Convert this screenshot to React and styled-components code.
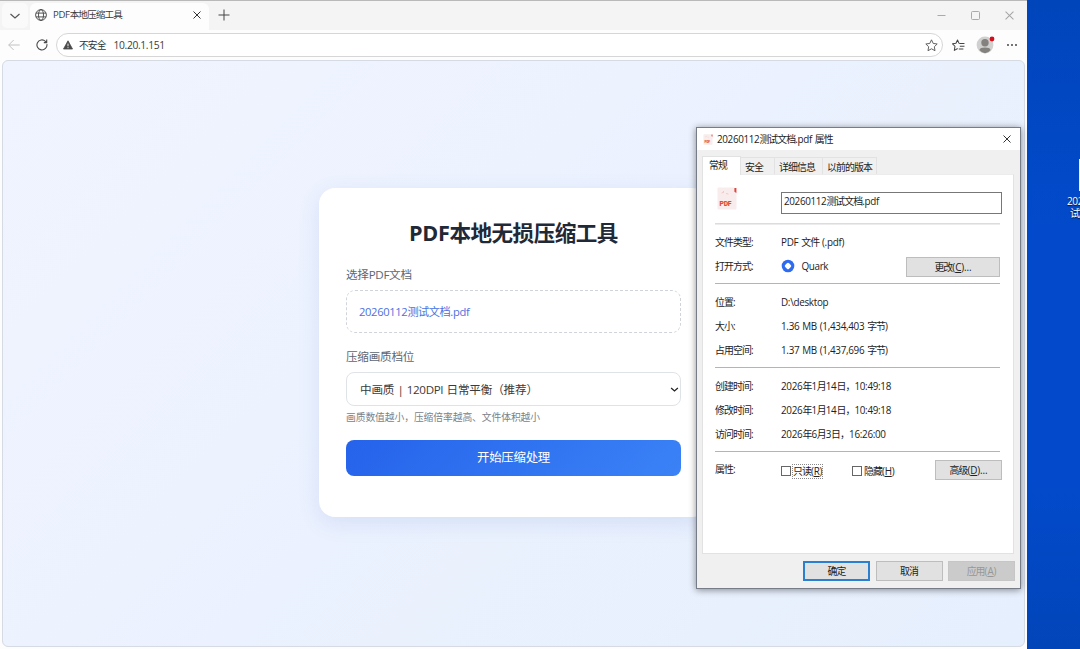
import React from 'react';
import styled, { createGlobalStyle } from 'styled-components';

const HAN = /([\u3000-\u9fff\uff00-\uffef]+)/;

// Chinese runs are set tighter than the latin ones
const Text = ({ children }) =>
  children.split(HAN).map((part, i) => (HAN.test(part) ? <Han key={i}>{part}</Han> : part));

const ChevronIcon = ({ size = 12, width = 1.2, color = '#555' }) => (
  <svg width={size} height={size} viewBox="0 0 12 12" fill="none" stroke={color} strokeWidth={width}>
    <path d="M1.5 4L6 8l4.5-4" />
  </svg>
);

const CloseIcon = ({ size = 8, color = '#333', width = 1 }) => (
  <svg width={size} height={size} viewBox="0 0 8 8" stroke={color} strokeWidth={width}>
    <path d="M.5.5l7 7M7.5.5l-7 7" />
  </svg>
);

const GlobeIcon = () => (
  <svg width="12" height="12" viewBox="0 0 12 12" fill="none" stroke="#444" strokeWidth="0.9">
    <circle cx="6" cy="6" r="5.4" />
    <ellipse cx="6" cy="6" rx="2.5" ry="5.4" />
    <path d="M1 4.1h10M1 7.9h10" />
  </svg>
);

const BackIcon = () => (
  <svg width="12" height="12" viewBox="0 0 12 12" fill="none" stroke="#c2c2c2" strokeWidth="1">
    <path d="M11.7 6H.7M5.7 1L.7 6l5 5" />
  </svg>
);

const ReloadIcon = () => (
  <svg width="12" height="12" viewBox="0 0 12 12" fill="none" stroke="#4a4a4a" strokeWidth="1.1">
    <path d="M10.9 5.2A5 5 0 1 1 9.4 2.3L10.6 3.4M10.7.6v3H7.8" />
  </svg>
);

const WarningIcon = () => (
  <svg width="10" height="10" viewBox="0 0 10 10">
    <path d="M5 .8L9.5 9H.5z" fill="#4a4a4a" stroke="#4a4a4a" strokeWidth="0.8" strokeLinejoin="round" />
    <path d="M5 3.6v2.7M5 7.2v1" stroke="#fff" strokeWidth="0.9" />
  </svg>
);

const StarIcon = () => (
  <svg width="13" height="13" viewBox="0 0 24 24" fill="none" stroke="#555" strokeWidth="1.7" strokeLinejoin="round">
    <path d="M12 1.5l3.2 6.7 7.3 1-5.3 5.1 1.3 7.3L12 18.1l-6.5 3.5 1.3-7.3L1.5 9.2l7.3-1z" />
  </svg>
);

const FavoritesIcon = () => (
  <svg width="13" height="13" viewBox="0 0 24 24" fill="none" stroke="#444" strokeWidth="1.9" strokeLinejoin="round">
    <path d="M14 8.2l-1.2-.6L10.2 2 7.3 8 1 8.9l4.500 4.500L4.300 21l6.200-3.500" />
    <path d="M13.5 8.5H23M14.5 13.5H23M12.5 18.5H21" />
  </svg>
);

const ProfileIcon = () => (
  <svg width="20" height="20" viewBox="0 0 20 20">
    <circle cx="9" cy="10" r="8.4" fill="#d0d0ce" />
    <circle cx="9" cy="7.8" r="3.7" fill="#83827f" />
    <path d="M3.4 15c.5-2 2.6-2.6 5.6-2.6s5.1.6 5.6 2.6A8.4 8.4 0 0 1 9 18.3 8.4 8.4 0 0 1 3.4 15z" fill="#83827f" />
    <circle cx="16" cy="4" r="2.4" fill="#d0101d" />
  </svg>
);

const PdfIcon = ({ width = 20, height = 23 }) => (
  <svg width={width} height={height} viewBox="0 0 20 23">
    <path d="M1.5.5h15.2L19.5 4v17.5a1 1 0 0 1-1 1h-17a1 1 0 0 1-1-1v-20a1 1 0 0 1 1-1z" fill="#f8ecec" />
    <path d="M17.4 1h2v5l-2-1.200z" fill="#e0453c" />
    <path d="M4.500 6l2.500-.8M9 6.500l2.500.6M6 5l1-1" stroke="#f0c4c2" strokeWidth="0.9" />
    <text x="2.6" y="19.4" fontFamily="Roboto, sans-serif" fontWeight="900" fontSize="7" textLength="11.5" lengthAdjust="spacingAndGlyphs" fill="#e2483b">
      PDF
    </text>
  </svg>
);

const QuarkIcon = () => (
  <svg width="14" height="14" viewBox="0 0 14 14">
    <circle cx="7" cy="7" r="6.3" fill="#2e6bef" />
    <path d="M7 5.300L8.700 7 7 8.700 5.300 7z" fill="#fff" stroke="#fff" strokeWidth="3" strokeLinejoin="round" />
  </svg>
);

const App = () => (
  <Desktop>
    <GlobalStyle />
    <Browser>
      <TabStrip>
        <TabMenu>
          <ChevronIcon />
        </TabMenu>
        <Tab>
          <GlobeIcon />
          <TabTitle><Text>PDF本地压缩工具</Text></TabTitle>
          <CloseIcon />
        </Tab>
        <NewTab>
          <svg width="12" height="12" viewBox="0 0 12 12" stroke="#444" strokeWidth="1">
            <path d="M6 .5v11M.5 6h11" />
          </svg>
        </NewTab>
        <WindowControls>
          <svg width="9" height="9" viewBox="0 0 9 9" stroke="#aaa"><path d="M.5 4.5h8" /></svg>
          <svg width="9" height="9" viewBox="0 0 9 9" fill="none" stroke="#aaa"><rect x=".5" y=".5" width="8" height="8" rx="1" /></svg>
          <CloseIcon size={9} color="#a5a5a5" width={0.9} />
        </WindowControls>
      </TabStrip>
      <Toolbar>
        <BackIcon />
        <ReloadIcon />
        <AddressBar>
          <WarningIcon />
          <Security><Text>不安全</Text></Security>
          <Url>10.20.1.151</Url>
          <StarIcon />
        </AddressBar>
        <FavoritesIcon />
        <ProfileIcon />
        <svg width="12" height="12" viewBox="0 0 12 12" fill="#333">
          <circle cx="2" cy="6" r="0.9" />
          <circle cx="6" cy="6" r="0.9" />
          <circle cx="10" cy="6" r="0.9" />
        </svg>
      </Toolbar>
      <Page>
        <Card>
          <Title><Text>PDF本地无损压缩工具</Text></Title>
          <Label><Text>选择PDF文档</Text></Label>
          <FileBox><Text>20260112测试文档.pdf</Text></FileBox>
          <Label><Text>压缩画质档位</Text></Label>
          <Select>
            <span><Text>中画质 | 120DPI 日常平衡（推荐）</Text></span>
            <ChevronIcon size={9} width={1.7} color="#222" />
          </Select>
          <Hint><Text>画质数值越小，压缩倍率越高、文件体积越小</Text></Hint>
          <Submit><Text>开始压缩处理</Text></Submit>
        </Card>
      </Page>
    </Browser>

    <DesktopFile>
      <FileThumb />
      <FileName><Text>2026011</Text></FileName>
      <FileName $indent><Text>试文档</Text></FileName>
    </DesktopFile>

    <Dialog>
      <DialogTitle>
        <PdfIcon width={10} height={11} />
        <DialogName><Text>20260112测试文档.pdf 属性</Text></DialogName>
        <CloseIcon />
      </DialogTitle>
      <Tabs>
        <DialogTab $active $width={39}><Text>常规</Text></DialogTab>
        <DialogTab $width={34}><Text>安全</Text></DialogTab>
        <DialogTab $width={48}><Text>详细信息</Text></DialogTab>
        <DialogTab $width={54}><Text>以前的版本</Text></DialogTab>
      </Tabs>
      <Panel>
        <FileRow>
          <PdfIcon />
          <NameInput><Text>20260112测试文档.pdf</Text></NameInput>
        </FileRow>
        <Separator $light />
        <Section>
          <Row>
            <Key><Text>文件类型:</Text></Key>
            <Value><Text>PDF 文件 (.pdf)</Text></Value>
          </Row>
          <Row>
            <Key><Text>打开方式:</Text></Key>
            <AppName><QuarkIcon />Quark</AppName>
            <ChangeButton $width={94}><Text>更改(</Text><u>C</u>)...</ChangeButton>
          </Row>
        </Section>
        <Separator />
        <Section>
          <Row><Key><Text>位置:</Text></Key><Value>D:\desktop</Value></Row>
          <Row><Key><Text>大小:</Text></Key><Value><Text>1.36 MB (1,434,403 字节)</Text></Value></Row>
          <Row><Key><Text>占用空间:</Text></Key><Value><Text>1.37 MB (1,437,696 字节)</Text></Value></Row>
        </Section>
        <Separator />
        <Section>
          <Row><Key><Text>创建时间:</Text></Key><Value><Text>2026年1月14日，10:49:18</Text></Value></Row>
          <Row><Key><Text>修改时间:</Text></Key><Value><Text>2026年1月14日，10:49:18</Text></Value></Row>
          <Row><Key><Text>访问时间:</Text></Key><Value><Text>2026年6月3日，16:26:00</Text></Value></Row>
        </Section>
        <Separator />
        <AttributeRow>
          <Key><Text>属性:</Text></Key>
          <CheckField $width={71}>
            <Check />
            <CheckLabel $focused><Text>只读(</Text><u>R</u>)</CheckLabel>
          </CheckField>
          <CheckField $width={83}>
            <Check />
            <CheckLabel><Text>隐藏(</Text><u>H</u>)</CheckLabel>
          </CheckField>
          <Button $width={67}><Text>高级(</Text><u>D</u>)...</Button>
        </AttributeRow>
      </Panel>
      <Footer>
        <Button $width={67} $primary><Text>确定</Text></Button>
        <Button $width={67}><Text>取消</Text></Button>
        <Button $width={67} $disabled><Text>应用(</Text><u>A</u>)</Button>
      </Footer>
    </Dialog>
  </Desktop>
);

// Styled Components
const GlobalStyle = createGlobalStyle`
  * {
    box-sizing: border-box;
  }

  body {
    margin: 0;
    overflow: hidden;
    font-family: 'Open Sans', 'Noto Sans CJK SC', sans-serif;
    letter-spacing: -0.35px;
    word-spacing: 0.6px;
  }

  svg {
    flex: none;
    display: block;
  }
`;

const Han = styled.span`
  letter-spacing: -0.09em;
`;

const Desktop = styled.div`
  position: relative;
  width: 1080px;
  height: 649px;
  overflow: hidden;
  background: linear-gradient(180deg, #0145bb 0%, #024acb 35%, #024acb 75%, #0245b9 100%);
`;

const Browser = styled.div`
  display: flex;
  flex-direction: column;
  width: 1027px;
  height: 649px;
  padding-bottom: 2px;
  border-top: 1px solid #b9b9b9;
  background: #fdfdfd;
`;

const TabStrip = styled.div`
  display: flex;
  height: 29px;
  padding-top: 2px;
  background: #f4f4f4;
`;

const TabMenu = styled.div`
  display: flex;
  align-items: center;
  justify-content: center;
  width: 26px;
  height: 25px;
  margin: 0 2px;
  border-radius: 5px;
  background: #fafafa;
`;

const Tab = styled.div`
  display: flex;
  align-items: center;
  width: 179px;
  padding: 0 8px 4px 5px;
  border-radius: 6px 6px 0 0;
  background: #fdfdfd;
`;

const TabTitle = styled.span`
  flex: 1;
  margin-left: 6px;
  font-size: 9.6px;
  line-height: 14px;
  color: #3c3c3c;
`;

const NewTab = styled.div`
  display: flex;
  align-items: center;
  margin-left: 9px;
  padding-bottom: 4px;
`;

const WindowControls = styled.div`
  display: flex;
  align-items: center;
  gap: 25px;
  margin-left: auto;
  padding: 0 13px 3px 0;
`;

const Toolbar = styled.div`
  display: flex;
  align-items: center;
  height: 30px;
  padding: 0 9px 0 8px;

  > svg + svg {
    margin-left: 16px;
  }

  > div + svg {
    margin-left: 9px;
  }

  > div + svg + svg {
    margin-left: 11px;
  }

  > svg:last-child {
    margin-left: 10px;
  }
`;

const AddressBar = styled.div`
  display: flex;
  flex: 1;
  align-items: center;
  height: 24px;
  margin-left: 8px;
  padding: 0 4px 0 6px;
  border: 1px solid #d6d6d6;
  border-radius: 12px;
  background: #fff;
`;

const Security = styled.span`
  margin-left: 6px;
  font-size: 9.7px;
  color: #333;
`;

const Url = styled.span`
  flex: 1;
  margin-left: 8px;
  font-size: 10.3px;
  color: #3c3c3c;
`;

const Page = styled.div`
  display: flex;
  flex: 1;
  align-items: center;
  justify-content: center;
  margin: 0 2px;
  padding-bottom: 2px;
  border: 1px solid #d5dae3;
  border-radius: 6px;
  background: linear-gradient(135deg, #f0f4ff 0%, #e6effd 100%);
`;

const Card = styled.div`
  width: 389px;
  height: 329px;
  padding: 27px;
  border-radius: 16px;
  background: #fff;
  box-shadow: 0 6px 22px rgba(60, 100, 200, 0.12);
`;

const Title = styled.h1`
  margin: 0 0 16px;
  font-size: 21.6px;
  line-height: 36px;
  text-align: center;
  color: #1f2937;

  ${Han} {
    letter-spacing: -0.025em;
  }
`;

const Label = styled.div`
  font-size: 11.6px;
  line-height: 16px;
  color: #5c6672;

  ${Han} {
    letter-spacing: -0.02em;
  }
`;

const FileBox = styled.div`
  height: 43px;
  margin: 7px 0 16px;
  padding: 0 12px;
  border: 1.5px dashed #cfd4da;
  border-radius: 9px;
  font-size: 11.2px;
  line-height: 41px;
  color: #4a72e0;

  ${Han} {
    letter-spacing: -0.04em;
  }
`;

const Select = styled.div`
  display: flex;
  align-items: center;
  justify-content: space-between;
  height: 34px;
  margin-top: 7px;
  padding: 0 1px 0 13px;
  border: 1px solid #dfe3e8;
  border-radius: 8px;
  font-size: 11.6px;
  color: #3a3a3a;

  ${Han} {
    letter-spacing: -0.015em;
  }
`;

const Hint = styled.div`
  margin: 4px 0 14px;
  font-size: 9.8px;
  line-height: 16px;
  color: #7b828c;

  ${Han} {
    letter-spacing: -0.01em;
  }
`;

const Submit = styled.div`
  height: 36px;
  border-radius: 8px;
  background: linear-gradient(135deg, #2563eb, #3b82f6);
  font-size: 12.4px;
  line-height: 36px;
  text-align: center;
  color: #fff;

  ${Han} {
    letter-spacing: -0.02em;
  }
`;

const DesktopFile = styled.div`
  position: absolute;
  left: 1066px;
  top: 159px;
  width: 60px;
  color: #fff;
  font-size: 10px;
  line-height: 12px;
  text-shadow: 0 1px 1px rgba(0, 0, 0, 0.7);
`;

const FileThumb = styled.div`
  width: 26px;
  height: 32px;
  margin: 0 0 4px 13px;
  background: #e8eefb;
`;

const FileName = styled.div`
  padding-left: ${({ $indent }) => ($indent ? '4px' : '1px')};
`;

const Dialog = styled.div`
  position: absolute;
  left: 696px;
  top: 127px;
  width: 325px;
  height: 462px;
  padding: 0 5px;
  border: 1px solid #777d88;
  background: #f0f0f0;
  box-shadow: 0 1px 7px rgba(0, 0, 0, 0.45);
  font-size: 9.9px;
  color: #222;
`;

const DialogTitle = styled.div`
  display: flex;
  align-items: center;
  height: 22px;
  margin: 0 -5px 6px;
  padding: 0 9px 0 6px;
  background: #fff;
`;

const DialogName = styled.span`
  flex: 1;
  margin-left: 4px;
`;

const Tabs = styled.div`
  display: flex;
  align-items: flex-end;
  height: 18px;
`;

const DialogTab = styled.div`
  width: ${({ $width }) => $width}px;
  height: ${({ $active }) => ($active ? '19px' : '17px')};
  margin-bottom: ${({ $active }) => ($active ? '-1px' : '0')};
  border: 1px solid #e2e2e2;
  border-bottom: 0;
  border-left-width: ${({ $active }) => ($active ? '1px' : '0')};
  background: ${({ $active }) => ($active ? '#fff' : '#f0f0f0')};
  line-height: ${({ $active }) => ($active ? '17px' : '18px')};
  padding-left: ${({ $active }) => ($active ? '6px' : '4px')};
  white-space: nowrap;
`;

const Panel = styled.div`
  width: 312px;
  height: 380px;
  padding: 12px 11px 0 12px;
  border: 1px solid #e2e2e2;
  border-top-color: #ececec;
  background: #fff;
`;

const FileRow = styled.div`
  display: flex;
  justify-content: space-between;
  height: 36px;
  padding-left: 2px;
`;

const NameInput = styled.div`
  width: 221px;
  height: 22px;
  margin-top: 5px;
  padding-left: 2px;
  border: 1px solid #777;
  line-height: 16px;
`;

const Separator = styled.div`
  height: 1px;
  margin-right: 2px;
  background: ${({ $light }) => ($light ? '#dcdcdc' : '#b4b4b4')};
  box-shadow: ${({ $light }) => ($light ? '0 1px 0 #ececec' : 'none')};
`;

const Section = styled.div`
  padding: 6px 0 5px;
`;

const Row = styled.div`
  display: flex;
  align-items: center;
  height: 24px;
`;

const Key = styled.span`
  width: 66px;
  white-space: nowrap;
`;

const Value = styled.span`
  white-space: nowrap;
  letter-spacing: -0.3px;
`;

const AppName = styled.span`
  display: flex;
  flex: 1;
  align-items: center;
  gap: 6.5px;
`;

const Button = styled.div`
  width: ${({ $width }) => $width}px;
  height: 20px;
  border: ${({ $primary }) => ($primary ? '2px solid #2a7fcf' : '1px solid #bdbdbd')};
  border-color: ${({ $disabled }) => $disabled && '#c6c6c6'};
  background: ${({ $disabled }) => ($disabled ? '#cbcbcb' : '#e1e1e1')};
  color: ${({ $disabled }) => ($disabled ? '#979797' : '#222')};
  line-height: ${({ $primary }) => ($primary ? '16px' : '18px')};
  letter-spacing: -0.1px;
  text-align: center;
  white-space: nowrap;
`;

const ChangeButton = styled(Button)`
  margin: 1px 2px 0 0;
`;

const AttributeRow = styled.div`
  display: flex;
  padding-top: 8px;

  > ${Key} {
    line-height: 19px;
  }
`;

const CheckField = styled.div`
  display: flex;
  align-items: center;
  width: ${({ $width }) => $width}px;
  height: 22px;
`;

const Check = styled.div`
  width: 10px;
  height: 10px;
  border: 1px solid #666;
`;

const CheckLabel = styled.span`
  height: 13px;
  margin-left: 2px;
  outline: ${({ $focused }) => ($focused ? '1px dotted #888' : 'none')};
  line-height: 13px;
  letter-spacing: -0.2px;
  white-space: nowrap;
`;

const Footer = styled.div`
  display: flex;
  justify-content: flex-end;
  gap: 5.5px;
  margin-top: 7px;
`;

export default App;
